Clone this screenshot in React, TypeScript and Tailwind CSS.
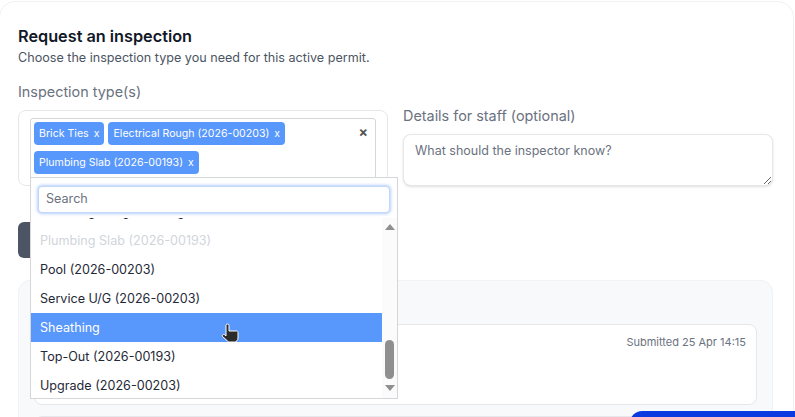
import * as React from "react";

const options = [
  { label: "Plumbing Rough Underground" },
  { label: "Plumbing Slab (2026-00193)", disabled: true },
  { label: "Pool (2026-00203)" },
  { label: "Service U/G (2026-00203)" },
  { label: "Sheathing", active: true },
  { label: "Top-Out (2026-00193)" },
  { label: "Upgrade (2026-00203)" },
];

function Tag({ label }: { label: string }) {
  return (
    <span className="flex h-[23px] items-center gap-[5px] rounded-[4px] bg-[#5897fb] px-[5px] text-[10.6px] text-white">
      {label}
      <span>x</span>
    </span>
  );
}

function Dropdown() {
  return (
    <div className="absolute left-[12px] top-[94px] z-10 w-[368px] border border-[#d4d6da] bg-white">
      <div className="px-[7px] pb-[5px] pt-[8px]">
        <div className="flex h-[27px] items-center rounded-[4px] border border-[#c3d6f7] bg-white px-[7px] text-[12.6px] text-[#6b7280] shadow-[0_0_3px_1px_rgba(88,151,251,0.45)]">
          Search
        </div>
      </div>
      <div className="relative flex h-[180px] overflow-hidden">
        <div className="flex-1 overflow-hidden">
          <div className="-mt-[21px]">
            {options.map((o) => (
              <div
                key={o.label}
                className={
                  "flex h-[29px] items-center px-[9px] pt-[2px] text-[12.6px] " +
                  (o.active
                    ? "bg-[#5897fb] text-white"
                    : o.disabled
                      ? "text-[#d1d5db]"
                      : "text-[#1f2937]")
                }
              >
                {o.label}
              </div>
            ))}
          </div>
        </div>
        <div className="flex w-[15px] flex-col items-center bg-[#fbfbfb] pb-[7px] pt-[6px]">
          <svg width="10" height="6" viewBox="0 0 10 6" className="fill-[#8f8f8f]">
            <path d="M5 0 10 6H0z" />
          </svg>
          <div className="mb-[6px] mt-auto h-[39px] w-[9px] rounded-[5px] bg-[#8f8f8f]" />
          <svg width="10" height="6" viewBox="0 0 10 6" className="fill-[#8f8f8f]">
            <path d="M0 0h10L5 6z" />
          </svg>
        </div>
      </div>
      {/* hand cursor over the hovered row */}
      <svg
        width="18"
        height="20"
        viewBox="0 0 18 20"
        className="absolute left-[190px] top-[145px]"
      >
        <path
          d="M5 2.500a1.500 1.500 0 0 1 3 0V8h7.500c1 0 1.500.7 1.500 1.500V15c0 2-1.500 4-3.500 4H8.500c-1 0-2-.6-2.500-1.500L1.500 13.500c-.8-1.200.7-2.700 2-1.800L5 13z"
          fill="#2b2b2b"
          stroke="#fff"
          strokeWidth="1"
          strokeLinejoin="round"
        />
      </svg>
    </div>
  );
}

export default function App() {
  return (
    <div className="relative h-[417px] w-[795px] overflow-hidden bg-white font-['Inter',sans-serif]">
      <div className="ml-[-1px] mt-[1px] h-[440px] w-[795px] rounded-[16px] border border-[#f0f1f3] bg-white pl-[18px] pr-[20px] pt-[24px]">
        <h2 className="text-[16.25px] font-semibold leading-[20px] text-[#111827]">
          Request an inspection
        </h2>
        <p className="mt-[3px] text-[12.6px] leading-[18px] text-[#4b5563]">
          Choose the inspection type you need for this active permit.
        </p>

        <div className="mt-[16px] grid grid-cols-2 items-end gap-x-[15px]">
          <div className="relative">
            <div className="mb-[9px] text-[14.4px] leading-[18px] text-[#6b7280]">Inspection type(s)</div>
            <div className="h-[76px] rounded-[8px] border border-[#e5e7eb] bg-white px-[11px] py-[7px]">
              <div className="relative h-[70px] rounded-t-[3px] border border-[#d4d6da] px-[3px] pt-[3px]">
                <div className="flex flex-wrap gap-x-[4px] gap-y-[6px] pr-[20px]">
                  <Tag label="Brick Ties" />
                  <Tag label="Electrical Rough (2026-00203)" />
                  <Tag label="Plumbing Slab (2026-00193)" />
                </div>
                <span className="absolute right-[7px] top-[4px] text-[14px] font-bold leading-[18px] text-[#555555]">×</span>
              </div>
            </div>
            <Dropdown />
          </div>
          <div>
            <div className="mb-[9px] text-[14.4px] leading-[18px] text-[#6b7280]">Details for staff (optional)</div>
            <textarea
              readOnly
              placeholder="What should the inspector know?"
              className="block h-[52px] w-full rounded-[8px] border border-[#e5e7eb] bg-white px-[11px] py-[7px] text-[12.5px] leading-[18px] shadow-sm placeholder:text-[#6b7280]"
            />
          </div>
        </div>

        <div className="mt-[36px] h-[36px] w-[180px] rounded-[6px] bg-[#4b5563]" />

        <div className="mt-[22px] h-[150px] rounded-[12px] border border-[#f1f2f5] bg-[#f8f9fb] px-[15px] pt-[43px]">
          <div className="flex h-[81px] justify-end rounded-[8px] border border-[#e5e7eb] bg-white px-[10px] py-[9px]">
            <span className="text-[11px] leading-[16px] text-[#6b7280]">Submitted 25 Apr 14:15</span>
          </div>
          <div className="mt-[11px] h-[40px] rounded-[8px] border border-[#e5e7eb] bg-white" />
        </div>
      </div>
      <div className="absolute left-[630px] top-[411px] h-[20px] w-[180px] rounded-t-[12px] bg-[#0b3be0]" />
    </div>
  );
}
